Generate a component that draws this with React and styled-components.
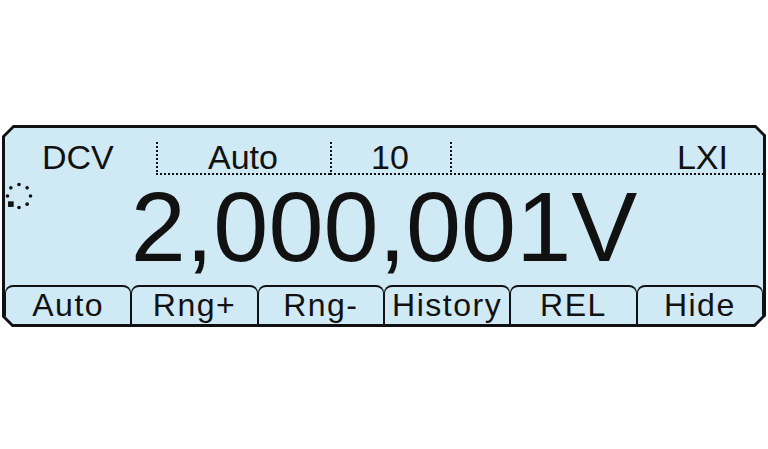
import React from "react";
import styled, { createGlobalStyle, css } from "styled-components";

const GlobalStyle = createGlobalStyle`
  html, body {
    margin: 0;
    padding: 0;
    background: #ffffff;
  }
  body {
    font-family: "Liberation Sans", Arial, sans-serif;
    color: #111;
  }
`;

const LCD_BLUE = "#cfe9f5";
const INK = "#111";

const Page = styled.div`
  width: 768px;
  height: 449px;
  padding: 125px 2px 0 2px;
  box-sizing: border-box;
`;

// black frame with chamfered corners, the screen sits inside it
const Frame = styled.div`
  width: 764px;
  height: 202px;
  padding: 3px;
  box-sizing: border-box;
  background: ${INK};
  clip-path: polygon(
    11px 0, calc(100% - 10px) 0, 100% 10px,
    100% calc(100% - 11px), calc(100% - 11px) 100%,
    10px 100%, 0 calc(100% - 10px), 0 11px
  );
`;

const Screen = styled.div`
  height: 100%;
  background: ${LCD_BLUE};
  display: flex;
  flex-direction: column;
  clip-path: polygon(
    9px 0, calc(100% - 8px) 0, 100% 8px,
    100% calc(100% - 9px), calc(100% - 9px) 100%,
    8px 100%, 0 calc(100% - 8px), 0 9px
  );
`;

// --- status header ---
const Header = styled.div`
  height: 47px;
  display: flex;
  align-items: flex-end;
`;

// square LCD dots along the left edge and the bottom
const dotted = css`
  background-image:
    repeating-linear-gradient(to bottom, ${INK} 0 2px, transparent 2px 4px),
    repeating-linear-gradient(to right, ${INK} 0 2px, transparent 2px 4px);
  background-size: 2px 100%, 100% 2px;
  background-position: left top, left bottom;
  background-repeat: no-repeat;
`;

const HeaderCell = styled.div`
  height: 33px;
  box-sizing: border-box;
  width: ${(p) => p.$width || "auto"};
  flex: ${(p) => (p.$grow ? 1 : "none")};
  padding: ${(p) => p.$pad || "0"};
  padding-bottom: 2px;
  text-align: ${(p) => p.$align || "center"};
  font-size: 34px;
  line-height: 30px;
  ${(p) => p.$divider && dotted}
`;

// --- main reading ---
const Main = styled.div`
  height: 110px;
  display: flex;
  align-items: flex-start;
`;

const Spinner = styled.svg`
  width: 28px;
  height: 28px;
  margin-top: 7px;
  flex: none;
`;

const Reading = styled.div`
  flex: 1;
  margin: 2px 28px 0 0;
  text-align: center;
  font-size: 99px;
  line-height: 100px;
  white-space: nowrap;
`;

// --- soft keys ---
const Keys = styled.div`
  height: 39px;
  display: flex;
`;

const Key = styled.div`
  flex: 1;
  box-sizing: border-box;
  border-top: 2px solid ${INK};
  border-left: 1.5px solid ${INK};
  border-right: 1.5px solid ${INK};
  border-radius: 8px 8px 0 0;
  text-align: center;
  font-size: 32px;
  line-height: 37px;
  letter-spacing: 1.5px;
  white-space: nowrap;
  overflow: hidden;
`;

function BusySpinner() {
  const r = 11.5;
  const dots = [0, 1, 2, 3, 4, 6, 7].map((i) => {
    const a = (i * Math.PI) / 4 - Math.PI / 2;
    return [14 + r * Math.cos(a), 14 + r * Math.sin(a)];
  });
  const sq = (5 * Math.PI) / 4 - Math.PI / 2;
  return (
    <Spinner viewBox="0 0 28 28">
      {dots.map(([x, y], i) => (
        <circle key={i} cx={x} cy={y} r="1.8" fill={INK} />
      ))}
      <rect
        x={14 + r * Math.cos(sq) - 2.8}
        y={14 + r * Math.sin(sq) - 2.8}
        width="5.6"
        height="5.6"
        fill={INK}
      />
    </Spinner>
  );
}

const softKeys = ["Auto", "Rng+", "Rng-", "History", "REL", "Hide"];

export default function App() {
  return (
    <>
      <GlobalStyle />
      <Page>
        <Frame>
          <Screen>
            <Header>
              <HeaderCell $width="151px" $align="left" $pad="0 0 0 37px">DCV</HeaderCell>
              <HeaderCell $width="174px" $divider>Auto</HeaderCell>
              <HeaderCell $width="120px" $divider>10</HeaderCell>
              <HeaderCell $grow $divider $align="right" $pad="0 35px 0 0">LXI</HeaderCell>
            </Header>
            <Main>
              <BusySpinner />
              <Reading>2,000,001V</Reading>
            </Main>
            <Keys>
              {softKeys.map((k) => (
                <Key key={k}>{k}</Key>
              ))}
            </Keys>
          </Screen>
        </Frame>
      </Page>
    </>
  );
}
